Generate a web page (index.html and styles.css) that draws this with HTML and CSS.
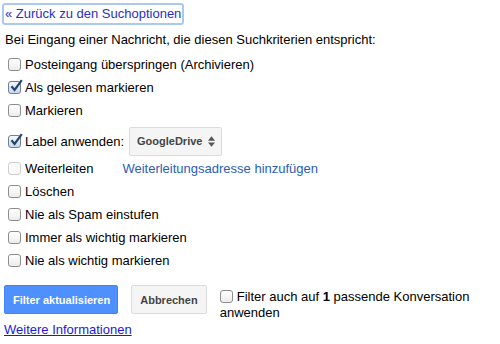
FILE: index.html
```html
<!DOCTYPE html>
<html lang="de">
<head>
    <meta charset="UTF-8">
    <title>Filter</title>
    <link rel="stylesheet" href="styles.css">
</head>
<body>
    <div class="filter-panel">
        <a class="back-link" href="#">« Zurück zu den Suchoptionen</a>
        <p class="intro">Bei Eingang einer Nachricht, die diesen Suchkriterien entspricht:</p>

        <!-- Aktionen -->
        <div class="actions">
            <label class="row"><span class="box"></span>Posteingang überspringen (Archivieren)</label>
            <label class="row"><span class="box checked"><svg viewBox="0 0 14 14"><path d="M2.5 7.2 L5.6 11 L12.8 1.2" fill="none" stroke="#25476e" stroke-width="2.2"/></svg></span>Als gelesen markieren</label>
            <label class="row"><span class="box"></span>Markieren</label>
            <label class="row row-label"><span class="box checked"><svg viewBox="0 0 14 14"><path d="M2.5 7.2 L5.6 11 L12.8 1.2" fill="none" stroke="#25476e" stroke-width="2.2"/></svg></span>Label anwenden:
                <span class="select">GoogleDrive
                    <svg class="arrows" viewBox="0 0 8 12"><path d="M0 5 L4 0 L8 5 Z M0 7 L4 12 L8 7 Z" fill="#555"/></svg>
                </span>
            </label>
            <label class="row"><span class="box disabled"></span>Weiterleiten <a class="forward-link" href="#">Weiterleitungsadresse hinzufügen</a></label>
            <label class="row"><span class="box"></span>Löschen</label>
            <label class="row"><span class="box"></span>Nie als Spam einstufen</label>
            <label class="row"><span class="box"></span>Immer als wichtig markieren</label>
            <label class="row"><span class="box"></span>Nie als wichtig markieren</label>
        </div>

        <div class="footer">
            <button class="btn btn-primary">Filter aktualisieren</button>
            <button class="btn">Abbrechen</button>
            <label class="apply"><span class="box"></span>Filter auch auf <b>1</b> passende Konversation anwenden</label>
        </div>
        <a class="more-link" href="#">Weitere Informationen</a>
    </div>
</body>
</html>
```

FILE: styles.css
```css
body {
    margin: 0;
    background-color: #fff;
    font-family: "Liberation Sans", Arial, sans-serif;
    font-size: 13px;
    color: #000;
}
.filter-panel {
    padding: 3px 5px 0 2px;
}
.back-link {
    display: inline-block;
    padding: 1px 1px 2px 1px;
    border: 2px solid #a9c9f3;
    border-radius: 3px;
    color: #2a2fc7;
    text-decoration: none;
}
.intro {
    margin: 7px 0 0 3px;
}
.actions {
    margin-top: 6px;
    margin-left: 6px;
}
.row {
    display: flex;
    align-items: center;
    height: 23px;
}
.row-label {
    height: 32px;
    margin: 3px 0 0 0;
}
.box {
    flex: 0 0 auto;
    position: relative;
    width: 11px;
    height: 11px;
    margin-right: 4px;
    border: 1px solid #8d8d8d;
    border-radius: 3px;
    background: linear-gradient(#fff, #ececec);
}
.box.checked {
    border-color: #6f7f95;
    background: linear-gradient(#f4f8fd, #c9d8ec);
}
.box.disabled {
    border-color: #cfcfcf;
    background: #fafafa;
}
.box svg {
    position: absolute;
    left: 0;
    top: -3px;
    width: 14px;
    height: 14px;
}
.select {
    display: inline-flex;
    align-items: center;
    gap: 6px;
    height: 27px;
    margin-left: 5px;
    padding: 0 6px 0 7px;
    border: 1px solid #dcdcdc;
    border-radius: 2px;
    background-color: #f5f5f5;
    color: #444;
    font-size: 11px;
    font-weight: bold;
}
.arrows {
    width: 7px;
    height: 11px;
}
.forward-link {
    margin-left: 29px;
    color: #2a5db9;
    text-decoration: none;
}
.footer {
    display: flex;
    align-items: flex-start;
    margin-top: 13px;
    margin-left: 2px;
}
.btn {
    height: 29px;
    margin-right: 13px;
    padding: 0 8px;
    border: 1px solid #dcdcdc;
    border-radius: 2px;
    background-color: #f5f5f5;
    color: #444;
    font-family: "Liberation Sans", Arial, sans-serif;
    font-size: 11px;
    font-weight: bold;
}
.btn-primary {
    padding: 0 7px 0 8px;
    border-color: #3f85f5;
    background-color: #4d90fe;
    color: #fff;
}
.apply {
    width: 262px;
    margin-top: 4px;
    line-height: 16px;
}
.apply .box {
    display: inline-block;
    vertical-align: -2px;
}
.more-link {
    display: inline-block;
    margin-top: 1px;
    margin-left: 2px;
    color: #1a1ad9;
}
```
